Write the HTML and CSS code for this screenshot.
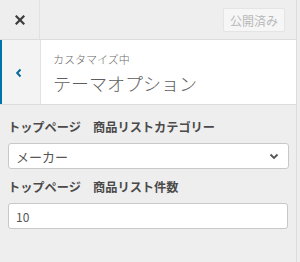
FILE: index.html
```html
<!DOCTYPE html>
<html lang="ja">
<head>
<meta charset="utf-8">
<link rel="stylesheet" href="styles.css">
</head>
<body>
<div class="panel">
  <div class="topbar">
    <div class="close">
      <svg width="10" height="10" viewBox="0 0 10 10"><path d="M1.5 1.5 L8.5 8.5 M8.5 1.5 L1.5 8.5" stroke="#3c3c3c" stroke-width="2.2" stroke-linecap="square"/></svg>
    </div>
    <div class="publish">公開済み</div>
  </div>
  <div class="section-head">
    <div class="back">
      <svg width="8" height="10" viewBox="0 0 8 10"><path d="M5.5 1.5 L2.2 5 L5.5 8.5" stroke="#0a6a9a" stroke-width="2" fill="none"/></svg>
    </div>
    <div class="title">
      <div class="sub">カスタマイズ中</div>
      <div class="main">テーマオプション</div>
    </div>
  </div>
  <div class="controls">
    <div class="label">トップページ　商品リストカテゴリー</div>
    <div class="select">
      <span>メーカー</span>
      <svg width="10" height="7" viewBox="0 0 10 7"><path d="M1.5 1.5 L5 5 L8.5 1.5" stroke="#555" stroke-width="1.8" fill="none"/></svg>
    </div>
    <div class="label second">トップページ　商品リスト件数</div>
    <div class="input">10</div>
  </div>
</div>
</body>
</html>
```
FILE: styles.css
```css
html, body {
  margin: 0;
  padding: 0;
  background: #eeeeee;
  font-family: "Noto Sans CJK JP", "Noto Sans", sans-serif;
}
.panel {
  width: 296px;
  height: 262px;
  border-right: 1px solid #dcdcdc;
  background: #eeeeee;
}
.topbar {
  height: 39px;
  border-bottom: 1px solid #dcdcdc;
  display: flex;
  align-items: center;
}
.close {
  width: 40px;
  height: 39px;
  box-sizing: border-box;
  border-right: 1px solid #e2e2e2;
  display: flex;
  align-items: center;
  justify-content: center;
}
.publish {
  margin-left: auto;
  margin-right: 11px;
  width: 62px;
  height: 24px;
  box-sizing: border-box;
  background: #f6f6f6;
  border: 1px solid #e4e4e4;
  border-radius: 2px;
  color: #b8b8b8;
  font-size: 12px;
  display: flex;
  align-items: center;
  justify-content: center;
  margin-top: 1px;
}
.section-head {
  height: 64px;
  display: flex;
  border-bottom: 1px solid #dcdcdc;
}
.back {
  width: 38px;
  border-left: 2px solid #0073aa;
  background: #f3f3f3;
  border-right: 1px solid #e2e2e2;
  display: flex;
  align-items: center;
  justify-content: center;
}
.back svg {
  margin-left: -4px;
  margin-top: 2px;
}
.title {
  flex: 1;
  background: #ffffff;
  padding-left: 12px;
  padding-top: 11px;
  box-sizing: border-box;
}
.sub {
  font-size: 11px;
  color: #6a6a6a;
  line-height: 16px;
  font-weight: 300;
}
.main {
  font-size: 18px;
  color: #5e5e5e;
  line-height: 24px;
  margin-top: 4px;
  font-weight: 300;
}
.controls {
  padding: 0 8px;
}
.label {
  font-size: 12.2px;
  font-weight: bold;
  color: #4a4a4a;
  line-height: 20px;
  margin-top: 12px;
  white-space: nowrap;
}
.label.second {
  margin-top: 8px;
}
.select, .input {
  margin-top: 6px;
  height: 26px;
  box-sizing: border-box;
  background: #fff;
  border: 1px solid #c8c8c8;
  border-radius: 3px;
  display: flex;
  align-items: center;
  font-size: 13px;
  color: #555;
  padding-left: 7px;
}
.select {
  width: 281px;
  justify-content: space-between;
  padding-right: 9px;
}
.input {
  width: 280px;
  font-size: 12px;
}
```
